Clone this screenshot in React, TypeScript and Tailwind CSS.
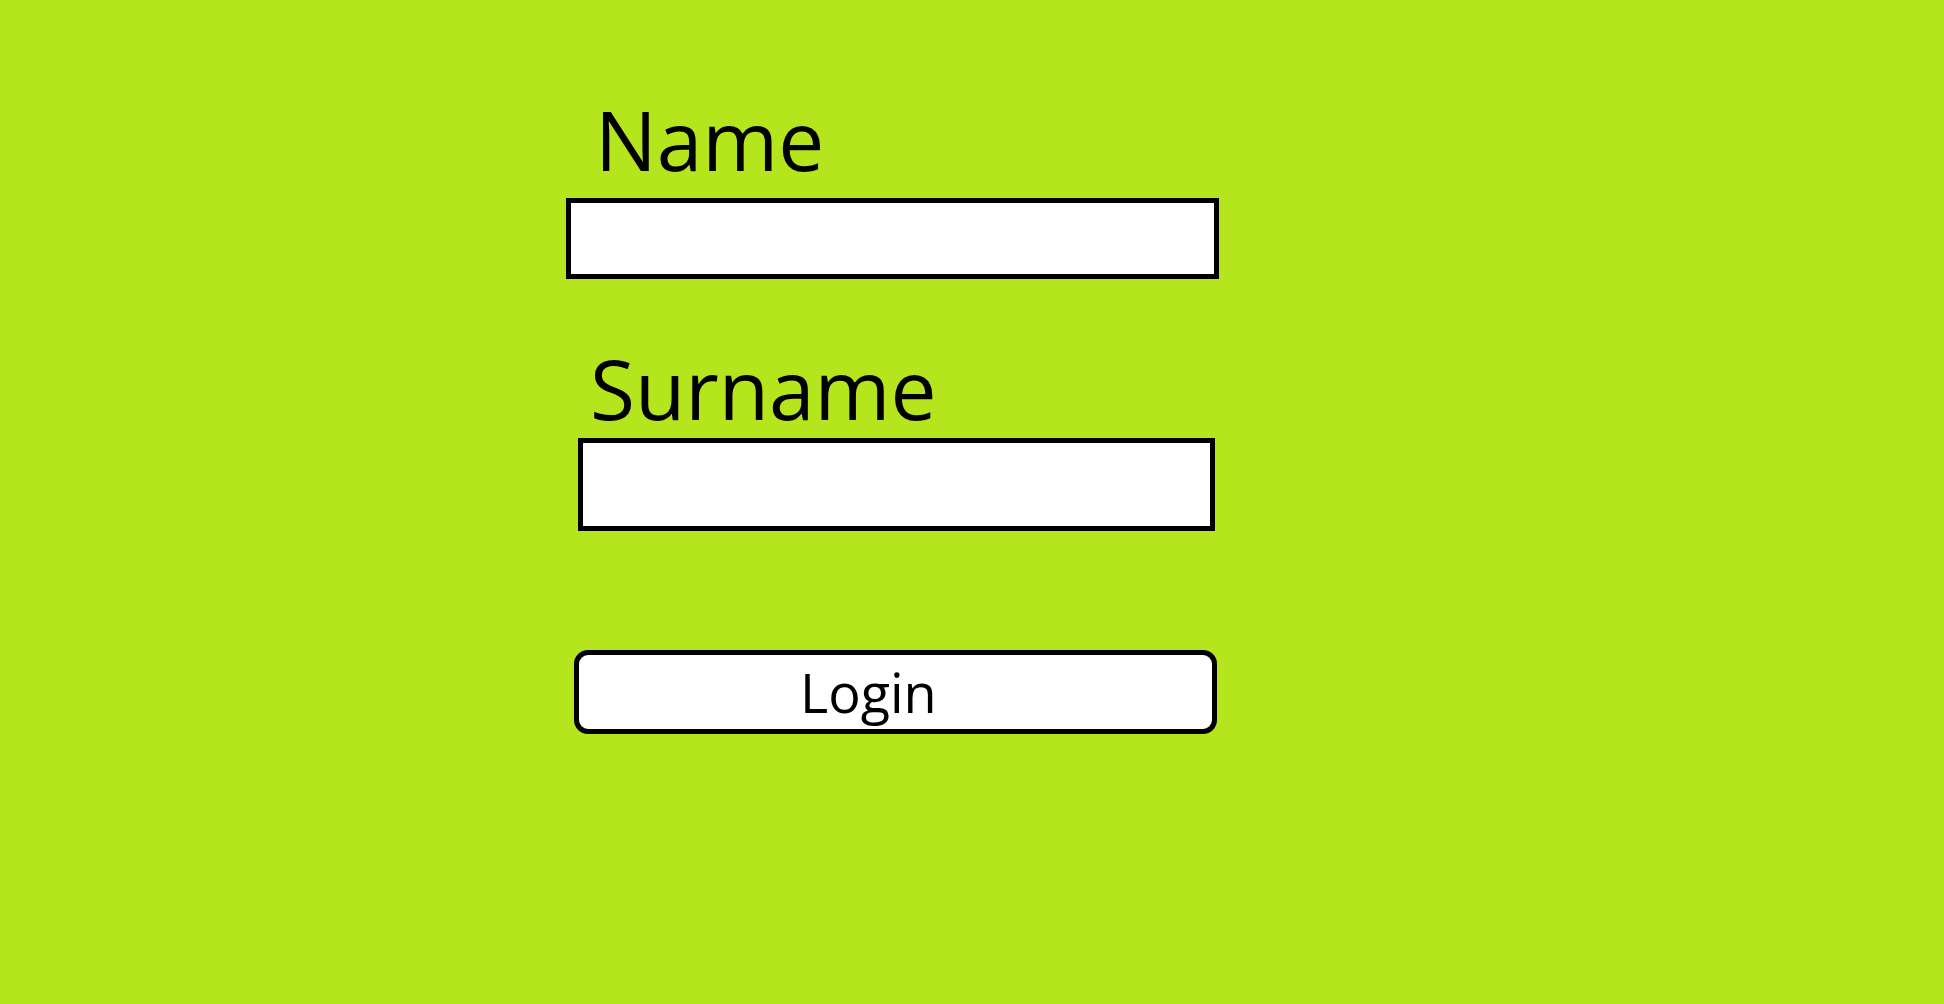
const App = () => {
  return (
    <div className="w-full h-[1004px] bg-[#b5e61d] font-['Open_Sans',sans-serif] font-medium text-black overflow-hidden">
      <form className="flex flex-col items-start pt-[98px]" onSubmit={(e) => e.preventDefault()}>
        {/* Name */}
        <label htmlFor="name" className="ml-[595px] text-[82px] leading-none">
          Name
        </label>
        <input
          id="name"
          type="text"
          className="block ml-[566px] mt-[18px] w-[653px] h-[81px] border-[5px] border-black bg-white outline-none px-3 text-3xl"
        />

        {/* Surname */}
        <label htmlFor="surname" className="ml-[590px] mt-[68px] text-[82px] leading-none">
          Surname
        </label>
        <input
          id="surname"
          type="text"
          className="block ml-[578px] mt-[9px] w-[637px] h-[93px] border-[5px] border-black bg-white outline-none px-3 text-3xl"
        />

        {/* Login */}
        <button
          type="submit"
          className="ml-[574px] mt-[119px] w-[643px] h-[84px] border-[5px] border-black rounded-[14px] bg-white flex items-start pt-[10px] pl-[221px] text-[54px] leading-none"
        >
          Login
        </button>
      </form>
    </div>
  );
};

export default App;
